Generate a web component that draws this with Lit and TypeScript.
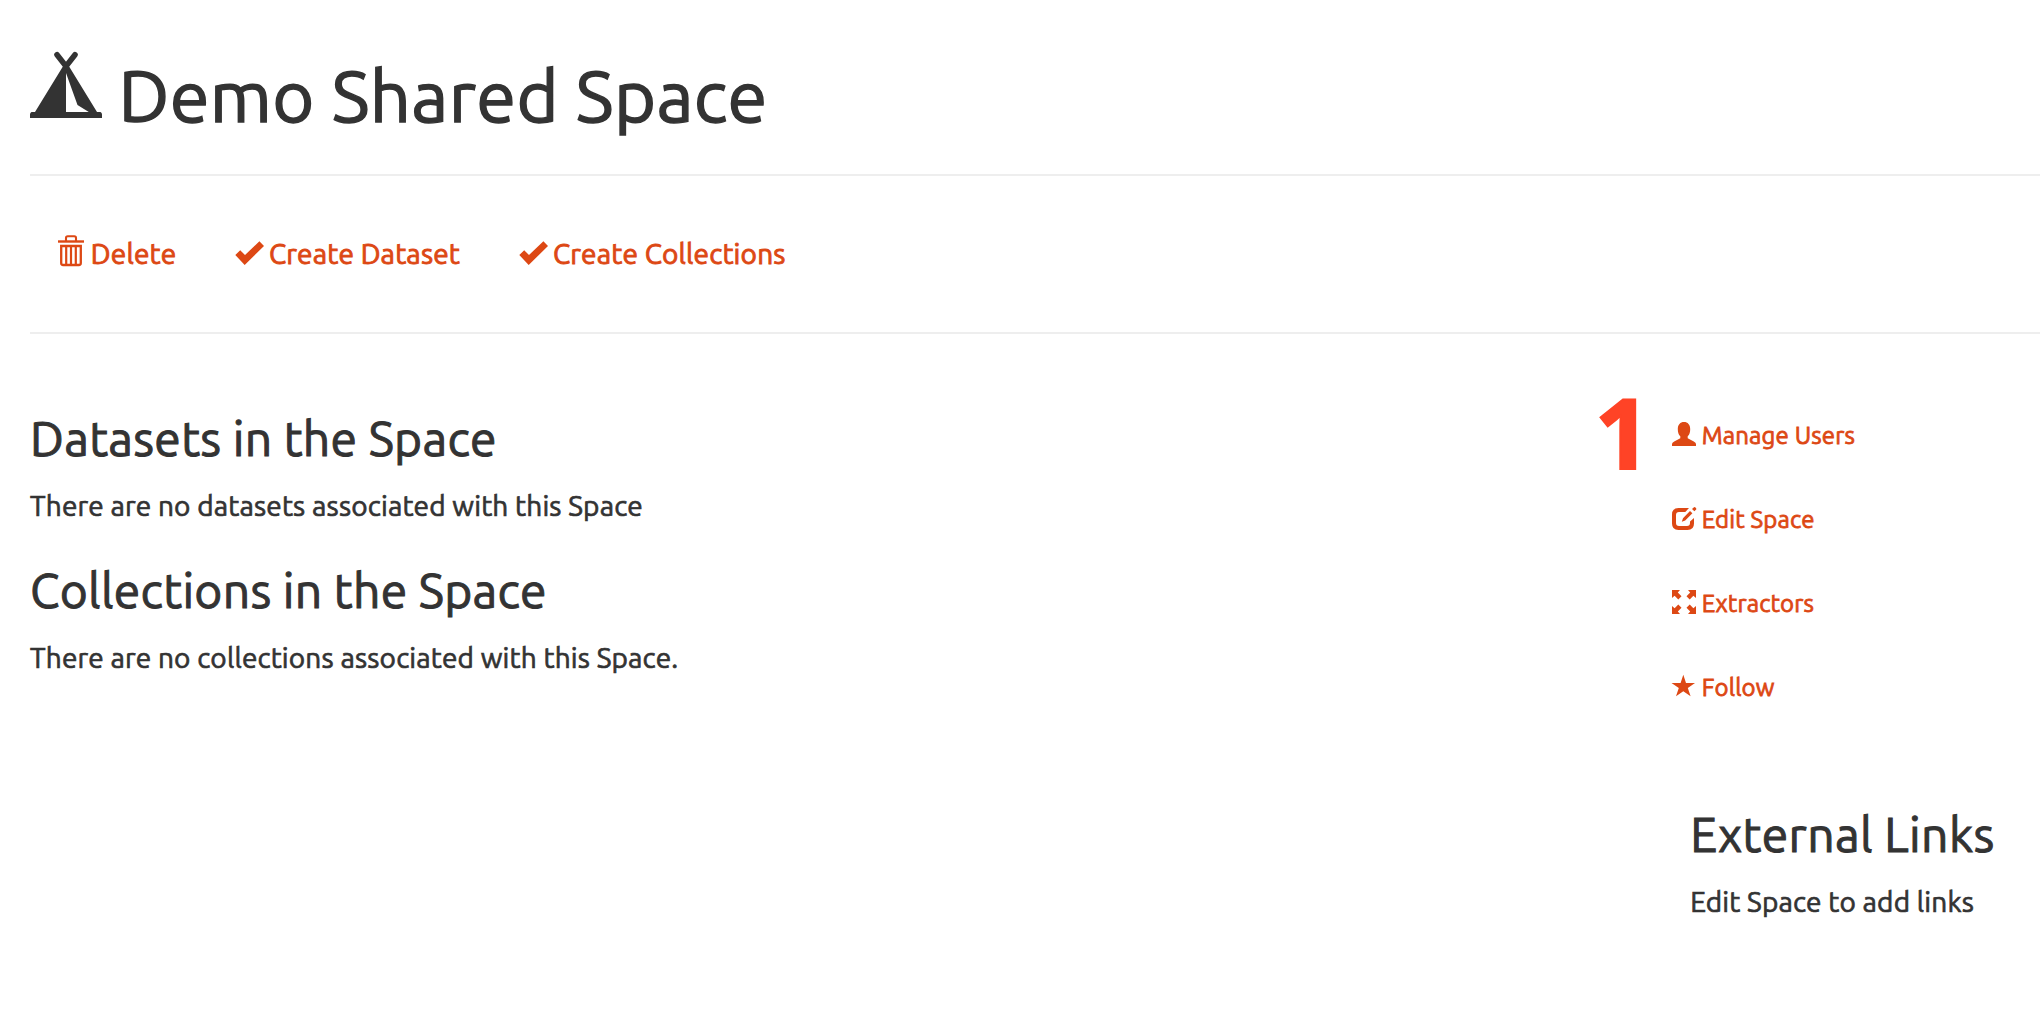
import { LitElement, html, css, svg } from "lit";

const tent = svg`<svg class="tent" viewBox="0 0 72 66">
  <path d="M27 2.800 36 14.200 45 2.800" fill="none" stroke="currentColor" stroke-width="5.600" stroke-linecap="round" stroke-linejoin="round"/>
  <path fill="currentColor" fill-rule="evenodd" d="M33.500 13.500h5L67 60h3.500Q72 60.800 72 62.500V66H0V62.500Q0 60.800 1.500 60H5ZM36 21V60H58.800L47.500 53Z"/>
</svg>`;

const trash = svg`<svg class="trash" viewBox="0 0 28 32" fill="none" stroke="currentColor">
  <path d="M0 6.500H26" stroke-width="2.400"/>
  <path d="M8 6V3Q8 1.300 9.700 1.300H16.300Q18 1.300 18 3V6" stroke-width="2.100"/>
  <path d="M3.200 11H22.800V28Q22.800 30 20.800 30H5.200Q3.200 30 3.200 28Z" stroke-width="2.300"/>
  <path d="M8.200 11V30M13 11V30M17.800 11V30" stroke-width="2.200"/>
</svg>`;

const check = svg`<svg class="check" viewBox="0 0 30 24"><path fill="currentColor" d="M.3 14 5.200 9.300 10 14 24.400.3 29 5 9.700 24Z"/></svg>`;

const user = svg`<svg class="small" viewBox="0 0 24 24"><path fill="currentColor" d="M12 0C15.800 0 18.200 2.700 18.200 7C18.200 10.500 17.500 12.500 15.700 14.300V16.300L21.800 19.400Q24 20.600 24 22V24H0V22Q0 20.600 2.200 19.400L8.300 16.300V14.300C6.500 12.500 5.800 10.500 5.800 7C5.800 2.700 8.200 0 12 0Z"/></svg>`;

const edit = svg`<svg class="small" viewBox="0 0 24 24"><path fill="currentColor" d="M6.500 2H17L13.300 6H7Q4 6 4 9V17Q4 20 7 20H15Q18 20 18 17V15.500L22 12V17.500Q22 24 15.500 24H6.500Q0 24 0 17.500V8.500Q0 2 6.500 2ZM18 5 20.400 7.300 13.200 14.400 9.800 15.700 11 12.200ZM22 1.200Q22.800.8 23.700 1.700T24.200 3.400L22.400 5.200 20 2.900Z"/></svg>`;

const expand = svg`<svg class="small" viewBox="0 0 24 24"><path fill="currentColor" d="M0 0H8L5.800 2.500 9.500 6.200 6.300 9.400 2.600 5.700 0 8ZM24 0V8L21.400 5.700 17.700 9.400 14.500 6.200 18.200 2.500 16 0ZM0 24V16L2.600 18.300 6.300 14.600 9.500 17.800 5.800 21.500 8 24ZM24 24H16L18.200 21.500 14.500 17.800 17.700 14.600 21.400 18.300 24 16Z"/></svg>`;

const star = svg`<svg class="small" viewBox="0 0 24 24"><path fill="currentColor" d="M11.300.8 14 9H23L15.800 14 18.600 22.300 11.300 17.200 4 22.300 6.800 14-.5 9H8.600Z"/></svg>`;

class AppRoot extends LitElement {
  static styles = css`
    :host { display: block; min-height: 1010px; box-sizing: border-box; overflow: hidden; background: #fff;
      color: #333; font-family: Ubuntu, "Noto Sans", "Open Sans", sans-serif; }
    h1, h2, p { margin: 0; font-weight: 400; white-space: nowrap; }
    svg { display: block; flex: none; overflow: visible; }
    .page { padding-left: 30px; }
    .head { display: flex; align-items: flex-start; gap: 16.5px; height: 122px; padding-top: 52px; border-bottom: 2px solid #eee; }
    .tent { width: 72px; height: 66px; }
    h1 { margin-top: 3.5px; font-size: 72px; line-height: 80px; letter-spacing: .38px; -webkit-text-stroke: 1.4px; }
    .tools { display: grid; grid-template-columns: 177px 284px auto; align-items: center; height: 156px; padding-left: 28px; border-bottom: 2px solid #eee; }
    a { display: flex; align-items: center; gap: 4px; color: #dd4814; white-space: nowrap; -webkit-text-stroke: .9px; }
    .tools a { font-size: 28px; line-height: 40px; letter-spacing: .18px; }
    .tools .del { gap: 4.8px; }
    .trash { width: 28px; height: 32px; margin-bottom: 6px; }
    .check { width: 30px; height: 24px; margin-bottom: 2px; }
    .main { display: grid; grid-template-columns: 1642px 368px; }
    .content { padding-top: 74px; }
    h2 { margin-bottom: 17.5px; font-size: 48px; line-height: 60px; letter-spacing: .3px; -webkit-text-stroke: 1px; }
    p { font-size: 28px; line-height: 40px; letter-spacing: .165px; -webkit-text-stroke: .7px; }
    .content p + h2 { margin-top: 34.5px; }
    .side { padding-top: 59px; }
    .side a { position: relative; height: 84px; gap: 5.7px; font-size: 24px; letter-spacing: .17px; -webkit-text-stroke: .8px; }
    .small { width: 24px; height: 24px; margin-bottom: 2px; }
    .links { padding: 75px 0 0 18.2px; }
    .links h2 { letter-spacing: .37px; }
    .side .step { position: absolute; left: -77px; top: -12px; color: #ff4326; font: 700 97px/100px "Open Sans", sans-serif; -webkit-text-stroke: 2.2px; }
  `;

  render() {
    return html`<div class="page">
      <header class="head">${tent}<h1>Demo Shared Space</h1></header>
      <nav class="tools">
        <a class="del">${trash}Delete</a>
        <a>${check}Create Dataset</a>
        <a>${check}Create Collections</a>
      </nav>
      <div class="main">
        <main class="content">
          <h2>Datasets in the Space</h2>
          <p>There are no datasets associated with this Space</p>
          <h2>Collections in the Space</h2>
          <p>There are no collections associated with this Space.</p>
        </main>
        <aside class="side">
          <a><span class="step">1</span>${user}Manage Users</a>
          <a>${edit}Edit Space</a>
          <a>${expand}Extractors</a>
          <a>${star}Follow</a>
          <section class="links">
            <h2>External Links</h2>
            <p>Edit Space to add links</p>
          </section>
        </aside>
      </div>
    </div>`;
  }
}
customElements.define("app-root", AppRoot);
